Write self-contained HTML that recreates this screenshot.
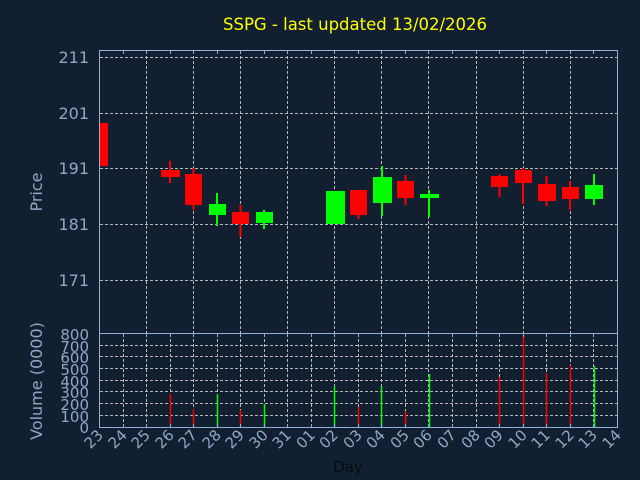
<!DOCTYPE html>
<html><head><meta charset="utf-8"><style>
html,body{margin:0;padding:0;background:#111f31;width:640px;height:480px;overflow:hidden}
svg{display:block;font-family:"DejaVu Sans","Liberation Sans",sans-serif}
</style></head><body>
<svg width="640" height="480" viewBox="0 0 640 480">
<rect width="640" height="480" fill="#111f31"/>
<text x="355" y="30" fill="#ffff00" font-size="16.5" text-anchor="middle" textLength="264">SSPG - last updated 13/02/2026</text>
<g stroke="#b8b8b8" stroke-width="1" stroke-dasharray="3,2" fill="none">
<path d="M100 57.5H617M100 113.5H617M100 168.5H617M100 224.5H617M100 280.5H617"/>
<path d="M146.5 51V333M193.5 51V333M240.5 51V333M287.5 51V333M334.5 51V333M381.5 51V333M428.5 51V333M476.5 51V333M523.5 51V333M570.5 51V333"/>
<path d="M100 345.5H617M100 356.5H617M100 368.5H617M100 380.5H617M100 391.5H617M100 403.5H617M100 415.5H617"/>
<path d="M123.5 334V427M146.5 334V427M170.5 334V427M193.5 334V427M217.5 334V427M240.5 334V427M264.5 334V427M287.5 334V427M311.5 334V427M334.5 334V427M358.5 334V427M381.5 334V427M405.5 334V427M428.5 334V427M452.5 334V427M476.5 334V427M499.5 334V427M523.5 334V427M546.5 334V427M570.5 334V427M593.5 334V427"/>
</g>
<g stroke-width="2">
<rect x="100" y="123" width="8" height="43" fill="#ff0000"/>
<line x1="170" y1="161" x2="170" y2="183" stroke="#ff0000"/><rect x="161" y="170" width="19" height="7" fill="#ff0000"/>
<line x1="193.5" y1="168" x2="193.5" y2="210" stroke="#ff0000"/><rect x="185" y="174" width="17" height="31" fill="#ff0000"/>
<line x1="217" y1="193" x2="217" y2="226" stroke="#00ff00"/><rect x="209" y="204" width="17" height="11" fill="#00ff00"/>
<line x1="240.5" y1="205" x2="240.5" y2="237" stroke="#ff0000"/><rect x="232" y="212" width="17" height="12" fill="#ff0000"/>
<line x1="264" y1="210" x2="264" y2="229" stroke="#00ff00"/><rect x="256" y="212" width="17" height="11" fill="#00ff00"/>
<rect x="326" y="191" width="19" height="33" fill="#00ff00"/>
<line x1="358.5" y1="190" x2="358.5" y2="219" stroke="#ff0000"/><rect x="350" y="190" width="17" height="25" fill="#ff0000"/>
<line x1="382" y1="166" x2="382" y2="216" stroke="#00ff00"/><rect x="373" y="177" width="19" height="26" fill="#00ff00"/>
<line x1="405.5" y1="175" x2="405.5" y2="205" stroke="#ff0000"/><rect x="397" y="181" width="17" height="17" fill="#ff0000"/>
<line x1="429" y1="190" x2="429" y2="217" stroke="#00ff00"/><rect x="420" y="194" width="19" height="4" fill="#00ff00"/>
<line x1="499.5" y1="174" x2="499.5" y2="197" stroke="#ff0000"/><rect x="491" y="176" width="17" height="11" fill="#ff0000"/>
<line x1="523" y1="168" x2="523" y2="204" stroke="#ff0000"/><rect x="515" y="170" width="17" height="13" fill="#ff0000"/>
<line x1="546.5" y1="176" x2="546.5" y2="206" stroke="#ff0000"/><rect x="538" y="184" width="18" height="17" fill="#ff0000"/>
<line x1="570" y1="181" x2="570" y2="210" stroke="#ff0000"/><rect x="562" y="187" width="17" height="12" fill="#ff0000"/>
<line x1="594" y1="174" x2="594" y2="205" stroke="#00ff00"/><rect x="585" y="185" width="18" height="14" fill="#00ff00"/>
</g>
<g stroke-width="1.5">
<path d="M170.5 394V427M193.5 409V427M240.5 410V427M358.5 407V427M405.5 411V427M499.5 377V427M523.5 335V427M546.5 373V427M570.5 365V427" stroke="#ff0000"/>
<path d="M217.5 394V427M264.5 404V427M334.5 386V427M381.5 386V427M429.5 374V427M594.5 366V427" stroke="#00ff00"/>
</g>
<g stroke="#8fb0d8" stroke-width="1" fill="none">
<rect x="99.5" y="50.5" width="518" height="377"/>
<path d="M99.5 333.5H617.5"/>
<path d="M123.5 51v3M146.5 51v3M170.5 51v3M193.5 51v3M217.5 51v3M240.5 51v3M264.5 51v3M287.5 51v3M311.5 51v3M334.5 51v3M358.5 51v3M381.5 51v3M405.5 51v3M428.5 51v3M452.5 51v3M476.5 51v3M499.5 51v3M523.5 51v3M546.5 51v3M570.5 51v3M593.5 51v3"/>
<path d="M123.5 427v-3M146.5 427v-3M170.5 427v-3M193.5 427v-3M217.5 427v-3M240.5 427v-3M264.5 427v-3M287.5 427v-3M311.5 427v-3M334.5 427v-3M358.5 427v-3M381.5 427v-3M405.5 427v-3M428.5 427v-3M452.5 427v-3M476.5 427v-3M499.5 427v-3M523.5 427v-3M546.5 427v-3M570.5 427v-3M593.5 427v-3"/>
<path d="M123.5 334v3M146.5 334v3M170.5 334v3M193.5 334v3M217.5 334v3M240.5 334v3M264.5 334v3M287.5 334v3M311.5 334v3M334.5 334v3M358.5 334v3M381.5 334v3M405.5 334v3M428.5 334v3M452.5 334v3M476.5 334v3M499.5 334v3M523.5 334v3M546.5 334v3M570.5 334v3M593.5 334v3"/>
</g>
<g fill="#8fa8c8" font-size="16" text-anchor="end">
<text x="89" y="63">211</text><text x="89" y="119">201</text><text x="89" y="174">191</text><text x="89" y="230">181</text><text x="89" y="286">171</text>
</g>
<g fill="#8fa8c8" font-size="15" text-anchor="end">
<text x="89" y="340">800</text><text x="89" y="352">700</text><text x="89" y="363">600</text><text x="89" y="375">500</text><text x="89" y="387">400</text><text x="89" y="398">300</text><text x="89" y="410">200</text><text x="89" y="422">100</text><text x="89" y="433">0</text>
</g>
<text transform="translate(42,192) rotate(-90)" fill="#8fa8c8" font-size="16" text-anchor="middle">Price</text>
<text transform="translate(42,381) rotate(-90)" fill="#8fa8c8" font-size="16" text-anchor="middle">Volume (0000)</text>
<g fill="#8fa8c8" font-size="15" text-anchor="end">
<text transform="translate(104,436) rotate(-45)">23</text>
<text transform="translate(128,436) rotate(-45)">24</text>
<text transform="translate(151,436) rotate(-45)">25</text>
<text transform="translate(175,436) rotate(-45)">26</text>
<text transform="translate(198,436) rotate(-45)">27</text>
<text transform="translate(222,436) rotate(-45)">28</text>
<text transform="translate(245,436) rotate(-45)">29</text>
<text transform="translate(269,436) rotate(-45)">30</text>
<text transform="translate(292,436) rotate(-45)">31</text>
<text transform="translate(316,436) rotate(-45)">01</text>
<text transform="translate(339,436) rotate(-45)">02</text>
<text transform="translate(363,436) rotate(-45)">03</text>
<text transform="translate(386,436) rotate(-45)">04</text>
<text transform="translate(410,436) rotate(-45)">05</text>
<text transform="translate(433,436) rotate(-45)">06</text>
<text transform="translate(457,436) rotate(-45)">07</text>
<text transform="translate(481,436) rotate(-45)">08</text>
<text transform="translate(504,436) rotate(-45)">09</text>
<text transform="translate(528,436) rotate(-45)">10</text>
<text transform="translate(551,436) rotate(-45)">11</text>
<text transform="translate(575,436) rotate(-45)">12</text>
<text transform="translate(598,436) rotate(-45)">13</text>
<text transform="translate(622,436) rotate(-45)">14</text>
</g>
<text x="348" y="472" fill="#050a10" font-size="15" text-anchor="middle">Day</text>
</svg>
</body></html>
